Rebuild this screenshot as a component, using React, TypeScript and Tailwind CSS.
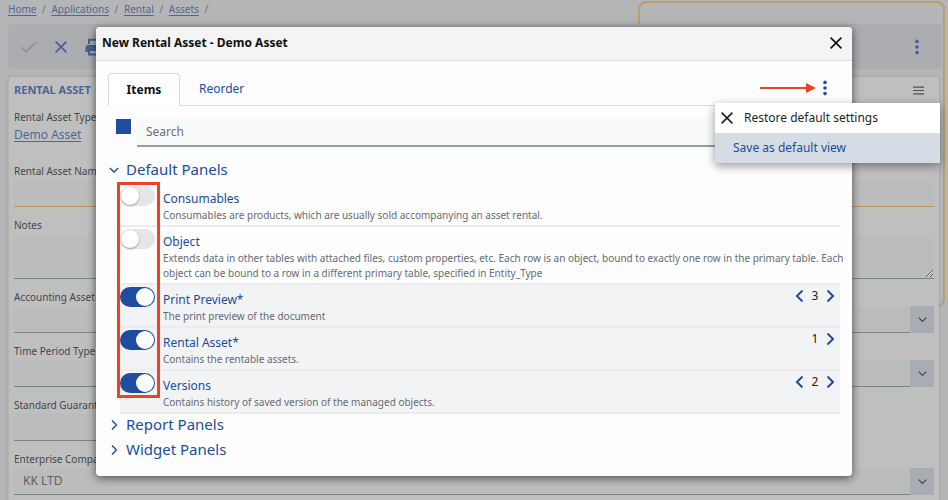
import React from "react";

type Panel = {
  name: string;
  description: string;
  enabled: boolean;
  order?: number;
  canMoveUp?: boolean;
};

const panels: Panel[] = [
  {
    name: "Consumables",
    description: "Consumables are products, which are usually sold accompanying an asset rental.",
    enabled: false,
  },
  {
    name: "Object",
    description:
      "Extends data in other tables with attached files, custom properties, etc. Each row is an object, bound to exactly one row in the primary table. Each object can be bound to a row in a different primary table, specified in Entity_Type",
    enabled: false,
  },
  {
    name: "Print Preview*",
    description: "The print preview of the document",
    enabled: true,
    order: 3,
    canMoveUp: true,
  },
  { name: "Rental Asset*", description: "Contains the rentable assets.", enabled: true, order: 1 },
  {
    name: "Versions",
    description: "Contains history of saved version of the managed objects.",
    enabled: true,
    order: 2,
    canMoveUp: true,
  },
];

function Cross({ className }: { className: string }) {
  return (
    <svg viewBox="0 0 12 12" className={className} fill="none" stroke="currentColor" aria-hidden="true">
      <path d="M0.6 0.6 L11.4 11.4 M11.4 0.6 L0.6 11.4" />
    </svg>
  );
}

function Dots() {
  return (
    <svg viewBox="0 0 4 16" className="h-4 w-1" fill="currentColor" aria-hidden="true">
      <circle cx="2" cy="2.4" r="1.8" />
      <circle cx="2" cy="8" r="1.8" />
      <circle cx="2" cy="13.6" r="1.8" />
    </svg>
  );
}

function Chevron({ dir, className }: { dir: "left" | "right" | "down"; className: string }) {
  const d = {
    left: "M8.5 0.5 L3 6 L8.5 11.5",
    right: "M3.5 0.5 L9 6 L3.5 11.5",
    down: "M1 3.5 L6 8.5 L11 3.5",
  }[dir];
  return (
    <svg viewBox="0 0 12 12" className={className} fill="none" stroke="currentColor" aria-hidden="true">
      <path d={d} />
    </svg>
  );
}

function SelectField({ id, label, value = "" }: { id: string; label: string; value?: string }) {
  return (
    <div className="mb-[9px]">
      <label htmlFor={id} className="block h-[18px] leading-[18px]">
        {label}
      </label>
      <div className="flex h-[27px]">
        <select
          id={id}
          defaultValue={value}
          className="min-w-0 flex-1 appearance-none border-b border-[#7e8387] bg-[#bbbdbc] px-[9px] text-xs text-[#5c6062]"
        >
          <option value={value}>{value}</option>
        </select>
        <span className="flex w-6 items-center justify-center bg-[#a9adb3] text-[#44494f]">
          <Chevron dir="down" className="h-[9px] w-[9px] stroke-[1.8]" />
        </span>
      </div>
    </div>
  );
}

function Breadcrumb() {
  return (
    <nav aria-label="Breadcrumb" className="flex h-[19px] items-center pl-2 text-[10px] text-[#6b6e73]">
      {["Home", "Applications", "Rental", "Assets"].map((item) => (
        <React.Fragment key={item}>
          <a href="#" className="text-[#4f6797] underline underline-offset-2">
            {item}
          </a>
          <span className="w-[15px] text-center">/</span>
        </React.Fragment>
      ))}
    </nav>
  );
}

function Toolbar() {
  return (
    <div className="relative mt-[5px] mr-[6px] ml-2 flex h-[45px] items-center gap-[18px] rounded-sm bg-[#abadb1] px-[13px] text-[#466096]">
      <button aria-label="Apply" className="text-[#8d9093]">
        <svg viewBox="0 0 16 12" className="h-3 w-4" fill="none" stroke="currentColor" strokeWidth="1.3">
          <path d="M0.7 6.2 L5.3 10.8 L15.3 0.8" />
        </svg>
      </button>
      <button aria-label="Cancel">
        <Cross className="h-3 w-3 stroke-[1.6]" />
      </button>
      <button aria-label="Print">
        <svg viewBox="0 0 18 18" className="h-[18px] w-[18px]" fill="currentColor">
          <path d="M3 0.8 H12.5 L15 3.3 V6 H13 V4 L11.8 2.8 H5 V6 H3 Z" />
          <path d="M3 7 H15 A2.6 2.6 0 0 1 17.6 9.6 V14 H15.4 V11.5 H2.8 V14 H0.5 V9.6 A2.6 2.6 0 0 1 3 7 Z" />
          <path fillRule="evenodd" d="M3 10.5 H15 V17.5 H3 Z M5.2 13 V15.4 H13 V13 Z" />
        </svg>
      </button>
      <button aria-label="More actions" className="mr-[10px] ml-auto">
        <Dots />
      </button>
    </div>
  );
}

function AssetForm() {
  return (
    <form className="relative mt-2 mr-[9px] ml-2 rounded-sm border-l border-[#b2b3b4] bg-[#bfbfbf] px-[5px] pb-4 text-[10px] text-[#43474a] shadow-[0_0_3px_#9a9b9e]">
      <header className="flex h-[31px] items-center justify-between pr-[10px] pb-1">
        <h2 className="text-[11px] font-bold text-[#4b6498]">RENTAL ASSET</h2>
        <svg viewBox="0 0 11 9" className="h-[9px] w-[11px]" stroke="#4d5053" strokeWidth="1.2">
          <path d="M0 1.2 H11 M0 4.5 H11 M0 7.8 H11" />
        </svg>
      </header>
      <div className="mb-[18px]">
        <p className="h-[18px] leading-[18px]">Rental Asset Type</p>
        <a href="#" className="block h-[18px] text-xs leading-[18px] text-[#4f6797] underline underline-offset-2">
          Demo Asset
        </a>
      </div>
      <div className="mb-[9px]">
        <label htmlFor="asset-name" className="block h-[18px] leading-[18px]">
          Rental Asset Name
        </label>
        <input id="asset-name" className="block h-[27px] w-full border-b border-[#c59650] bg-[#bbbdbc]" />
      </div>
      <div className="mb-[9px]">
        <label htmlFor="notes" className="block h-[18px] leading-[18px]">
          Notes
        </label>
        <textarea id="notes" className="block h-[45px] w-full border-b border-[#7e8387] bg-[#bbbdbc]" />
      </div>
      <SelectField id="accounting" label="Accounting Asset" />
      <SelectField id="period" label="Time Period Type" />
      <div className="mb-[9px] w-1/2">
        <label htmlFor="guarantee" className="block h-[18px] leading-[18px]">
          Standard Guarantee
        </label>
        <input id="guarantee" className="block h-[27px] w-full border-b border-[#7e8387] bg-[#bbbdbc]" />
      </div>
      <SelectField id="company" label="Enterprise Company" value="KK LTD" />
    </form>
  );
}

function PanelRow({ panel }: { panel: Panel }) {
  const id = "panel-" + panel.name.replace(/\W/g, "");
  return (
    <li
      className={
        "relative flex border-b-2 border-[#ececee] pb-[2px] " + (panel.enabled ? "bg-[#f2f3f5]" : "bg-transparent")
      }
    >
      <input
        id={id}
        type="checkbox"
        role="switch"
        defaultChecked={panel.enabled}
        className="mt-[2px] h-5 w-[35px] shrink-0 appearance-none rounded-full bg-[#e5e5e5] p-px before:block before:h-[18px] before:w-[18px] before:rounded-full before:bg-white before:shadow-[0_1px_2px_#999] checked:bg-[#204c9f] checked:before:ml-[15px] checked:before:shadow-none"
      />
      <div className="-mr-2 ml-2 flex-1 pt-[7px]">
        <label htmlFor={id} className="block h-[17px] text-xs leading-4 text-[#204ca0]">
          {panel.name}
        </label>
        <p className="text-[10px] leading-[15px] text-[#676b71]">{panel.description}</p>
      </div>
      {panel.order && (
        <div className="absolute top-[3px] right-1 flex h-4 items-center text-xs text-[#222]">
          {panel.canMoveUp && (
            <button aria-label="Move up" className="text-[#204ca0]">
              <Chevron dir="left" className="h-3 w-3 stroke-2" />
            </button>
          )}
          <span className="w-[18px] text-center">{panel.order}</span>
          <button aria-label="Move down" className="text-[#204ca0]">
            <Chevron dir="right" className="h-3 w-3 stroke-2" />
          </button>
        </div>
      )}
    </li>
  );
}

function GroupHeading({ label, open }: { label: string; open?: boolean }) {
  return (
    <h3 className="h-[25px] pb-1 text-[15px]">
      <button aria-expanded={!!open} className="flex h-full items-center gap-[7px] pl-px text-[#204ca0]">
        <Chevron dir={open ? "down" : "right"} className="h-[10px] w-[10px] stroke-[1.6]" />
        {label}
      </button>
    </h3>
  );
}

function SettingsMenu() {
  return (
    <div
      role="menu"
      className="absolute top-[76px] -right-[88px] w-[225px] bg-white text-xs shadow-[0_3px_9px_rgba(0,0,0,0.4)]"
    >
      <button role="menuitem" className="flex h-[30px] w-full items-center gap-[11px] pl-[6px] text-[#1c1f22]">
        <Cross className="h-3 w-3 stroke-[1.6]" />
        Restore default settings
      </button>
      <button role="menuitem" className="flex h-[30px] w-full items-center bg-[#d6dce5] pl-[18px] text-[#204ca0]">
        Save as default view
      </button>
    </div>
  );
}

function PanelsDialog() {
  return (
    <section
      role="dialog"
      aria-labelledby="dialog-title"
      className="absolute inset-x-24 top-[27px] rounded-sm bg-[#fdfdfd] shadow-[0_2px_10px_rgba(0,0,0,0.6)]"
    >
      <header className="flex h-[34px] items-center justify-between rounded-t-sm border-b border-[#d9dadb] bg-[#f4f4f4] pr-[10px] pb-px pl-[6px]">
        <h1 id="dialog-title" className="text-xs font-bold text-[#111]">
          New Rental Asset - Demo Asset
        </h1>
        <button aria-label="Close" className="text-[#111]">
          <Cross className="h-3 w-3 stroke-[1.6]" />
        </button>
      </header>
      <div className="px-3 pt-3 pb-3">
        <div className="flex h-[33px] text-xs">
          <div role="tablist" className="flex flex-1">
            <button
              role="tab"
              aria-selected="true"
              className="w-[72px] rounded-t-sm border border-b-0 border-[#d5dde5] bg-white pb-px font-bold text-[#111]"
            >
              Items
            </button>
            <button role="tab" aria-selected="false" className="border-b border-[#d5dde5] px-[19px] text-[#204ca0]">
              Reorder
            </button>
            <div className="flex flex-1 items-center justify-end gap-[7px] border-b border-[#d5dde5] pr-[13px] pb-[2px]">
              <svg viewBox="0 0 56 10" className="h-[10px] w-14" fill="#ee4226" aria-hidden="true">
                <path d="M0 4 H46 V0 L56 5 L46 10 V6 H0 Z" />
              </svg>
              <button aria-label="View settings" className="text-[#204ca0]">
                <Dots />
              </button>
            </div>
          </div>
        </div>
        <div className="mt-3 flex h-[29px] pl-2">
          <input
            type="checkbox"
            aria-label="Select all panels"
            defaultChecked
            className="mt-px h-[15px] w-[15px] appearance-none bg-[#204ca0]"
          />
          <input
            type="search"
            aria-label="Search"
            placeholder="Search"
            className="ml-[6px] min-w-0 flex-1 border-b-2 border-[#989da2] bg-[#f8faf9] px-[9px] pt-px text-xs text-[#555] placeholder:text-[#6a6e72]"
          />
        </div>
        <div className="mt-3">
          <GroupHeading label="Default Panels" open />
          <div className="relative ml-3">
            <ul>
              {panels.map((panel) => (
                <PanelRow key={panel.name} panel={panel} />
              ))}
            </ul>
            <div className="pointer-events-none absolute -top-[2px] bottom-4 -left-[3px] w-[43px] border-3 border-[#ee4226]" />
          </div>
          <GroupHeading label="Report Panels" />
          <GroupHeading label="Widget Panels" />
        </div>
      </div>
      <SettingsMenu />
    </section>
  );
}

export default function App() {
  return (
    <main className="relative h-screen overflow-hidden bg-[#b4b5b7] font-['Noto_Sans','Open_Sans',sans-serif]">
      <div className="absolute top-px right-[3px] h-[306px] w-[307px] rounded-lg border-2 border-[#bf9c6c]" />
      <Breadcrumb />
      <Toolbar />
      <AssetForm />
      <PanelsDialog />
    </main>
  );
}
